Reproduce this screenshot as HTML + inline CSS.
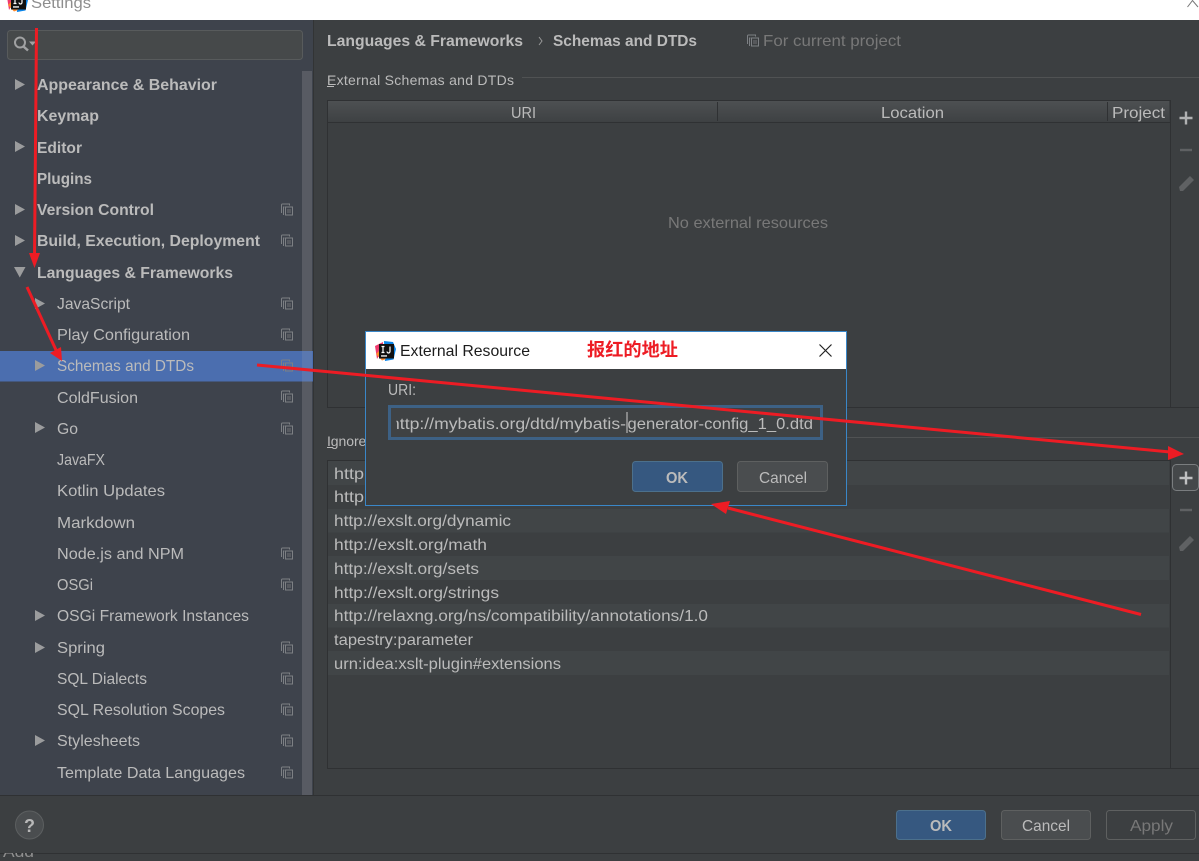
<!DOCTYPE html>
<html><head><meta charset="utf-8"><title>Settings</title>
<style>
html,body{margin:0;padding:0;background:#3c3f41;overflow:hidden}
svg{display:block}
text{font-family:"Liberation Sans","Noto Sans CJK SC",sans-serif;font-size:16px;fill:#bbb}
.b{font-weight:bold}
.d{fill:#787878}
</style></head><body>
<svg width="1199" height="861" viewBox="0 0 1199 861" xmlns="http://www.w3.org/2000/svg">
<defs>
<g id="c" fill="none" stroke="#7d8084" stroke-width="1"><path d="M-5.500 3.500v-8a1 1 0 0 1 1-1h7v1.500"/><path d="M-3.500 5.500v-8h1"/><rect x="-1.500" y="-2.500" width="7" height="8" fill="none"/><path d="M0 0.500h4M0 2.500h4" stroke="#707275"/></g>
<path id="r" d="M0 0L10 5.500L0 11z" fill="#9b9c9d"/>
<g id="logo"><path d="M0 5L8 1L8 8L2 18z" fill="#f03a6e"/><path d="M9 0L18 1L21 8L18.500 18.500L10 20z" fill="#0a84e8"/><path d="M1 13L7 19.500L11 18L4 10z" fill="#ff8a2b"/><rect x="4" y="3" width="15" height="14.500" fill="#111"/><rect x="6" y="14.300" width="6" height="1.300" fill="#fff"/><path d="M6.500 5.500h3M8 5.500v6M6.500 11.500h3M15 5.500v5a1.500 1.500 0 0 1-3 0" stroke="#fff" stroke-width="1.200" fill="none"/></g>
<g id="pen"><path d="M-7 9L-8 5L3 -6L7 -2L-4 9z" fill="#5f6163"/></g>
<clipPath id="ci"><rect x="396.500" y="405" width="418" height="35"/></clipPath>
<clipPath id="ca"><rect x="0" y="853" width="60" height="8"/></clipPath>
<clipPath id="ct"><rect x="0" y="0" width="1199" height="20"/></clipPath>
<linearGradient id="hg" x1="0" y1="0" x2="0" y2="1"><stop offset="0" stop-color="#4e5153"/><stop offset="1" stop-color="#3e4143"/></linearGradient>
</defs>

<rect width="1199" height="861" fill="#3c3f41"/>
<rect width="1199" height="20" fill="#fff"/>
<g clip-path="url(#ct)"><use href="#logo" x="7" y="-8"/></g>
<text x="31" y="8" textLength="60" lengthAdjust="spacingAndGlyphs" style="fill:#8e8e8e">Settings</text>
<path d="M1187.500 7L1192.500 0.500L1198 7" fill="none" stroke="#777"/>

<!-- sidebar -->
<rect x="0" y="20" width="313" height="775" fill="#3e434c"/>
<rect x="313" y="20" width="1" height="775" fill="#323435"/>
<rect x="7.500" y="30.500" width="295" height="29" rx="3" fill="#46494a" stroke="#585b5c"/>
<circle cx="20" cy="42.500" r="5" fill="none" stroke="#a0a1a2" stroke-width="2"/>
<path d="M23.500 46.500L28 50.500" stroke="#a0a1a2" stroke-width="2.500"/>
<path d="M29 41.500h7l-3.500 4z" fill="#a0a1a2"/>
<rect x="302" y="71" width="10" height="724" fill="#585b63"/>
<rect x="0" y="351" width="313" height="30.500" fill="#4b6eaf"/>
<rect x="302" y="351" width="10" height="30.500" fill="#5a78b0"/>

<use href="#r" x="15" y="79"/><use href="#r" x="15" y="141"/><use href="#r" x="15" y="204"/><use href="#r" x="15" y="235"/>
<path d="M14 267h11.500l-5.750 10.500z" fill="#9b9c9d"/>
<use href="#r" x="35" y="298"/><use href="#r" x="35" y="360"/><use href="#r" x="35" y="422"/><use href="#r" x="35" y="610"/><use href="#r" x="35" y="642"/><use href="#r" x="35" y="735"/>

<text class="b" x="37" y="90" textLength="180" lengthAdjust="spacingAndGlyphs">Appearance &amp; Behavior</text>
<text class="b" x="37" y="121" textLength="62" lengthAdjust="spacingAndGlyphs">Keymap</text>
<text class="b" x="37" y="153" textLength="45" lengthAdjust="spacingAndGlyphs">Editor</text>
<text class="b" x="37" y="184" textLength="55" lengthAdjust="spacingAndGlyphs">Plugins</text>
<text class="b" x="37" y="215" textLength="117" lengthAdjust="spacingAndGlyphs">Version Control</text>
<text class="b" x="37" y="246" textLength="223" lengthAdjust="spacingAndGlyphs">Build, Execution, Deployment</text>
<text class="b" x="37" y="278" textLength="196" lengthAdjust="spacingAndGlyphs">Languages &amp; Frameworks</text>
<text x="57" y="309" textLength="73" lengthAdjust="spacingAndGlyphs">JavaScript</text>
<text x="57" y="340" textLength="133" lengthAdjust="spacingAndGlyphs">Play Configuration</text>
<text x="57" y="371" textLength="137" lengthAdjust="spacingAndGlyphs">Schemas and DTDs</text>
<text x="57" y="403" textLength="81" lengthAdjust="spacingAndGlyphs">ColdFusion</text>
<text x="57" y="434" textLength="21" lengthAdjust="spacingAndGlyphs">Go</text>
<text x="57" y="465" textLength="48" lengthAdjust="spacingAndGlyphs">JavaFX</text>
<text x="57" y="496" textLength="108" lengthAdjust="spacingAndGlyphs">Kotlin Updates</text>
<text x="57" y="528" textLength="78" lengthAdjust="spacingAndGlyphs">Markdown</text>
<text x="57" y="559" textLength="127" lengthAdjust="spacingAndGlyphs">Node.js and NPM</text>
<text x="57" y="590" textLength="36" lengthAdjust="spacingAndGlyphs">OSGi</text>
<text x="57" y="621" textLength="192" lengthAdjust="spacingAndGlyphs">OSGi Framework Instances</text>
<text x="57" y="653" textLength="48" lengthAdjust="spacingAndGlyphs">Spring</text>
<text x="57" y="684" textLength="90" lengthAdjust="spacingAndGlyphs">SQL Dialects</text>
<text x="57" y="715" textLength="168" lengthAdjust="spacingAndGlyphs">SQL Resolution Scopes</text>
<text x="57" y="746" textLength="83" lengthAdjust="spacingAndGlyphs">Stylesheets</text>
<text x="57" y="778" textLength="188" lengthAdjust="spacingAndGlyphs">Template Data Languages</text>

<use href="#c" x="287" y="209.500"/><use href="#c" x="287" y="240.500"/><use href="#c" x="287" y="303.500"/><use href="#c" x="287" y="334.500"/><use href="#c" x="287" y="365.500"/><use href="#c" x="287" y="396.500"/><use href="#c" x="287" y="428.500"/><use href="#c" x="287" y="553.500"/><use href="#c" x="287" y="584.500"/><use href="#c" x="287" y="647.500"/><use href="#c" x="287" y="678.500"/><use href="#c" x="287" y="709.500"/><use href="#c" x="287" y="740.500"/><use href="#c" x="287" y="772.500"/>

<!-- header -->
<text class="b" x="327" y="46" textLength="196" lengthAdjust="spacingAndGlyphs">Languages &amp; Frameworks</text>
<path d="M539 37L542 41L539 45" fill="none" stroke="#999" stroke-width="1"/>
<text class="b" x="553" y="46" textLength="144" lengthAdjust="spacingAndGlyphs">Schemas and DTDs</text>
<use href="#c" x="753" y="40.500"/>
<text class="d" x="763" y="46" textLength="138" lengthAdjust="spacingAndGlyphs">For current project</text>

<!-- external table -->
<text x="327" y="85" textLength="187" lengthAdjust="spacing" style="font-size:14px">External Schemas and DTDs</text>
<rect x="327" y="86" width="7" height="1" fill="#bbb"/>
<rect x="522" y="77" width="677" height="1" fill="#505253"/>
<rect x="327" y="100" width="842" height="22" fill="url(#hg)"/>
<path d="M327 100.500H1170M327 122.500H1170M327.500 100V408M717.500 102V121M1107.500 102V121M1170.500 100V408M327 407.500H1199" stroke="#2f3133" fill="none"/>
<text x="511" y="118" textLength="25" lengthAdjust="spacingAndGlyphs">URI</text>
<text x="881" y="118" textLength="63" lengthAdjust="spacingAndGlyphs">Location</text>
<text x="1112" y="118" textLength="53" lengthAdjust="spacingAndGlyphs">Project</text>
<text class="d" x="668" y="228" textLength="160" lengthAdjust="spacingAndGlyphs">No external resources</text>
<path d="M1186 111.500V124.500M1179.500 118H1192.500" stroke="#b0b1b2" stroke-width="2.400"/>
<path d="M1180 150H1192" stroke="#5f6163" stroke-width="2.400"/>
<use href="#pen" x="1187" y="182"/>

<!-- ignored table -->
<text x="327" y="446" textLength="175" lengthAdjust="spacing" style="font-size:14px">Ignored Schemas and DTDs</text>
<rect x="327" y="447" width="5" height="1" fill="#bbb"/>
<rect x="847" y="437" width="352" height="1" fill="#505253"/>
<rect x="328" y="461" width="841" height="24" fill="#414547"/>
<rect x="328" y="509" width="841" height="23.500" fill="#414547"/>
<rect x="328" y="556" width="841" height="24" fill="#414547"/>
<rect x="328" y="604" width="841" height="23.500" fill="#414547"/>
<rect x="328" y="651" width="841" height="24" fill="#414547"/>
<path d="M327 460.500H1170M327 768.500H1199M327.500 460V769M1170.500 460V768" stroke="#2f3133" fill="none"/>
<text x="334" y="479" textLength="30" lengthAdjust="spacingAndGlyphs">http</text>
<text x="334" y="502" textLength="30" lengthAdjust="spacingAndGlyphs">http</text>
<text x="367" y="502" textLength="75" lengthAdjust="spacingAndGlyphs">://exslt.org</text>
<text x="334" y="526" textLength="177" lengthAdjust="spacingAndGlyphs">http://exslt.org/dynamic</text>
<text x="334" y="550" textLength="153" lengthAdjust="spacingAndGlyphs">http://exslt.org/math</text>
<text x="334" y="574" textLength="145" lengthAdjust="spacingAndGlyphs">http://exslt.org/sets</text>
<text x="334" y="598" textLength="165" lengthAdjust="spacingAndGlyphs">http://exslt.org/strings</text>
<text x="334" y="621" textLength="374" lengthAdjust="spacingAndGlyphs">http://relaxng.org/ns/compatibility/annotations/1.0</text>
<text x="334" y="645" textLength="139" lengthAdjust="spacingAndGlyphs">tapestry:parameter</text>
<text x="334" y="669" textLength="227" lengthAdjust="spacingAndGlyphs">urn:idea:xslt-plugin#extensions</text>
<rect x="1172.500" y="464.500" width="26" height="26" rx="4" fill="#45484a" stroke="#7a7d7f"/>
<path d="M1186 471.500V484.500M1179.500 478H1192.500" stroke="#c0c1c2" stroke-width="2.400"/>
<path d="M1180 510H1192" stroke="#5f6163" stroke-width="2.400"/>
<use href="#pen" x="1187" y="542"/>

<!-- bottom bar -->
<rect x="0" y="795" width="1199" height="1" fill="#2f3133"/>
<circle cx="29.500" cy="825" r="14" fill="#4a4d4f" stroke="#5c5f60"/>
<text class="b" x="24" y="832" style="font-size:18px;fill:#b8b8b8">?</text>
<rect x="896.500" y="810.500" width="89" height="29" rx="3" fill="#365880" stroke="#4c708c"/>
<text class="b" x="930" y="831" textLength="22" lengthAdjust="spacingAndGlyphs">OK</text>
<rect x="1001.500" y="810.500" width="89" height="29" rx="3" fill="#4a4d4f" stroke="#5e6060"/>
<text x="1022" y="831" textLength="48" lengthAdjust="spacingAndGlyphs">Cancel</text>
<rect x="1106.500" y="810.500" width="89" height="29" rx="3" fill="#3c3f41" stroke="#5e6060"/>
<text class="d" x="1130" y="831" textLength="43" lengthAdjust="spacingAndGlyphs">Apply</text>
<rect x="0" y="853" width="1199" height="1" fill="#2f3133"/>
<g clip-path="url(#ca)"><text x="3" y="857" textLength="31" lengthAdjust="spacingAndGlyphs" style="fill:#8f8f8f">Add</text></g>

<!-- dialog -->
<rect x="365.500" y="331.500" width="481" height="174" fill="#3c3f41" stroke="#3a87c8"/>
<rect x="366" y="332" width="480" height="37" fill="#fff"/>
<use href="#logo" x="375" y="341"/>
<text x="400" y="356" textLength="130" lengthAdjust="spacingAndGlyphs" style="fill:#1c1c1c">External Resource</text>
<text class="b" x="587" y="356" textLength="91" lengthAdjust="spacingAndGlyphs" style="font-size:18px;fill:#ed1c24">报红的地址</text>
<path d="M819.500 344.500L831.500 356.500M831.500 344.500L819.500 356.500" stroke="#222" stroke-width="1.200"/>
<text x="388" y="395" textLength="28" lengthAdjust="spacingAndGlyphs">URI:</text>
<rect x="389.500" y="406.500" width="432" height="32" fill="#3f4244" stroke="#3d6185" stroke-width="3"/>
<g clip-path="url(#ci)"><text x="390" y="429" textLength="236" lengthAdjust="spacingAndGlyphs">http://mybatis.org/dtd/mybatis-</text><text x="627.500" y="429" textLength="185.500" lengthAdjust="spacingAndGlyphs">generator-config_1_0.dtd</text></g>
<rect x="626.500" y="412" width="1" height="21" fill="#ccc"/>
<rect x="632.500" y="461.500" width="90" height="30" rx="3" fill="#365880" stroke="#4c708c"/>
<text class="b" x="666" y="483" textLength="22" lengthAdjust="spacingAndGlyphs">OK</text>
<rect x="737.500" y="461.500" width="90" height="30" rx="3" fill="#4a4d4f" stroke="#5e6060"/>
<text x="759" y="483" textLength="48" lengthAdjust="spacingAndGlyphs">Cancel</text>

<!-- red arrows -->
<g stroke="#ed1c24" stroke-width="3" fill="none">
<path d="M36.500 28L34.500 258"/>
<path d="M27 287L56 350"/>
<path d="M257 365L1170 452"/>
<path d="M1141 614.500L728 508"/>
</g>
<g fill="#ed1c24">
<path d="M29 253L40 253L34.500 268z"/>
<path d="M50 353L61 347L62 361z"/>
<path d="M1184 454L1168 446L1168 460z"/>
<path d="M711 504L730 501L726 514z"/>
</g>
</svg>
</body></html>
